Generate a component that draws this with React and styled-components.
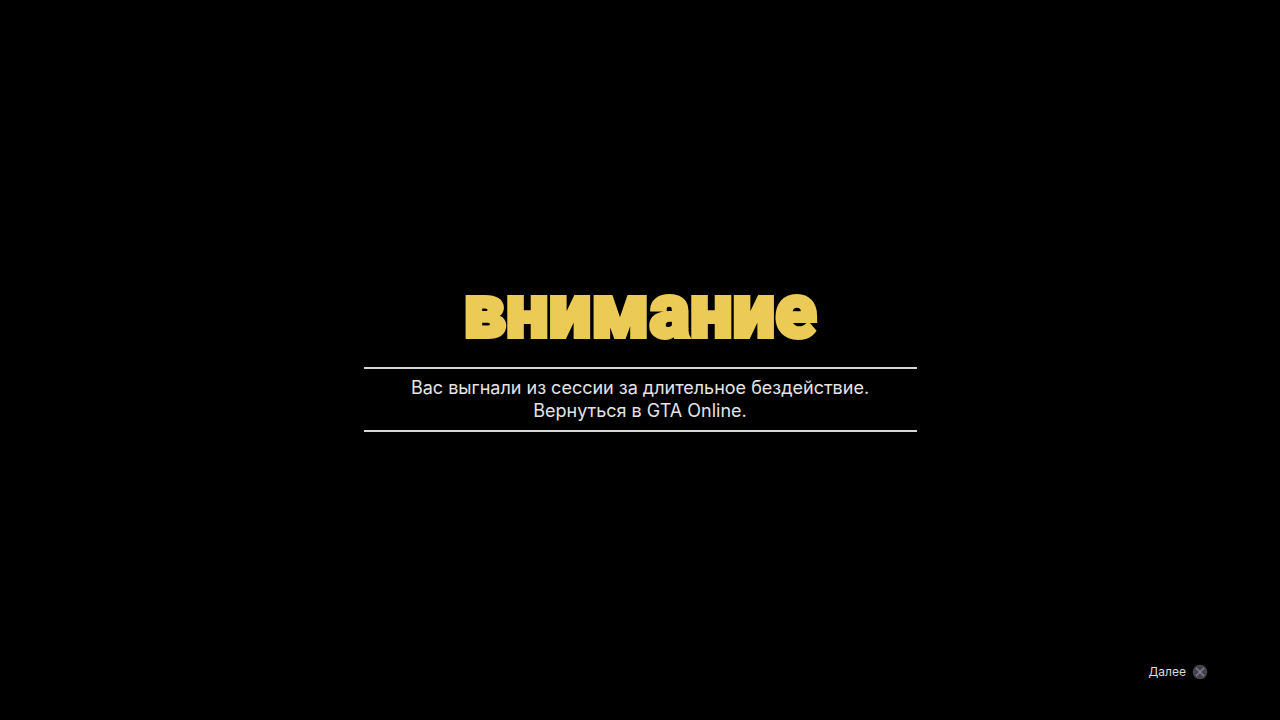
import React from "react";
import styled, { createGlobalStyle } from "styled-components";

const GlobalStyle = createGlobalStyle`
  body {
    margin: 0;
    background: #000;
    color: #e4e4e4;
    font-family: Inter, "Noto Sans", sans-serif;
  }
`;

const Screen = styled.div`
  display: grid;
  grid-template-rows: 1fr auto 1fr;
  min-height: 100vh;
`;

const Alert = styled.main`
  grid-row: 2;
  display: flex;
  flex-direction: column;
  align-items: center;
  gap: 24px;
  padding-bottom: 10px;
`;

const Title = styled.h1`
  margin: 0;
  color: #ebca55;
  font-family: Roboto, "Liberation Sans", sans-serif;
  font-size: 76px;
  font-weight: 900;
  line-height: 64px;
  -webkit-text-stroke: 4px #ebca55;
`;

const Message = styled.p`
  box-sizing: border-box;
  width: 100%;
  max-width: 553px;
  margin: 0;
  padding: 7px 0 8px;
  border: solid #d6d6d6;
  border-width: 2px 0;
  font-size: 18px;
  line-height: 23px;
  text-align: center;
`;

const Footer = styled.footer`
  grid-row: 3;
  align-self: end;
  display: flex;
  justify-content: flex-end;
  padding: 0 72px 40px;
`;

const PromptButton = styled.button`
  display: flex;
  align-items: center;
  gap: 6px;
  padding: 0;
  border: 0;
  background: none;
  color: #dcdcdc;
  font: inherit;
  font-size: 12px;
  line-height: 16px;
  cursor: pointer;
`;

const CrossIcon = () => (
  <svg width="16" height="16" viewBox="0 0 16 16" aria-hidden="true">
    <circle cx="8" cy="8" r="7.3" fill="#454446" />
    <path d="M4 4L12 12M12 4L4 12" stroke="#8484a4" strokeWidth="1.1" />
  </svg>
);

export default function App() {
  return (
    <>
      <GlobalStyle />
      <Screen>
        <Alert>
          <Title>внимание</Title>
          <Message>
            Вас выгнали из сессии за длительное бездействие.
            <br />
            Вернуться в GTA Online.
          </Message>
        </Alert>
        <Footer>
          <PromptButton type="button">
            Далее
            <CrossIcon />
          </PromptButton>
        </Footer>
      </Screen>
    </>
  );
}
